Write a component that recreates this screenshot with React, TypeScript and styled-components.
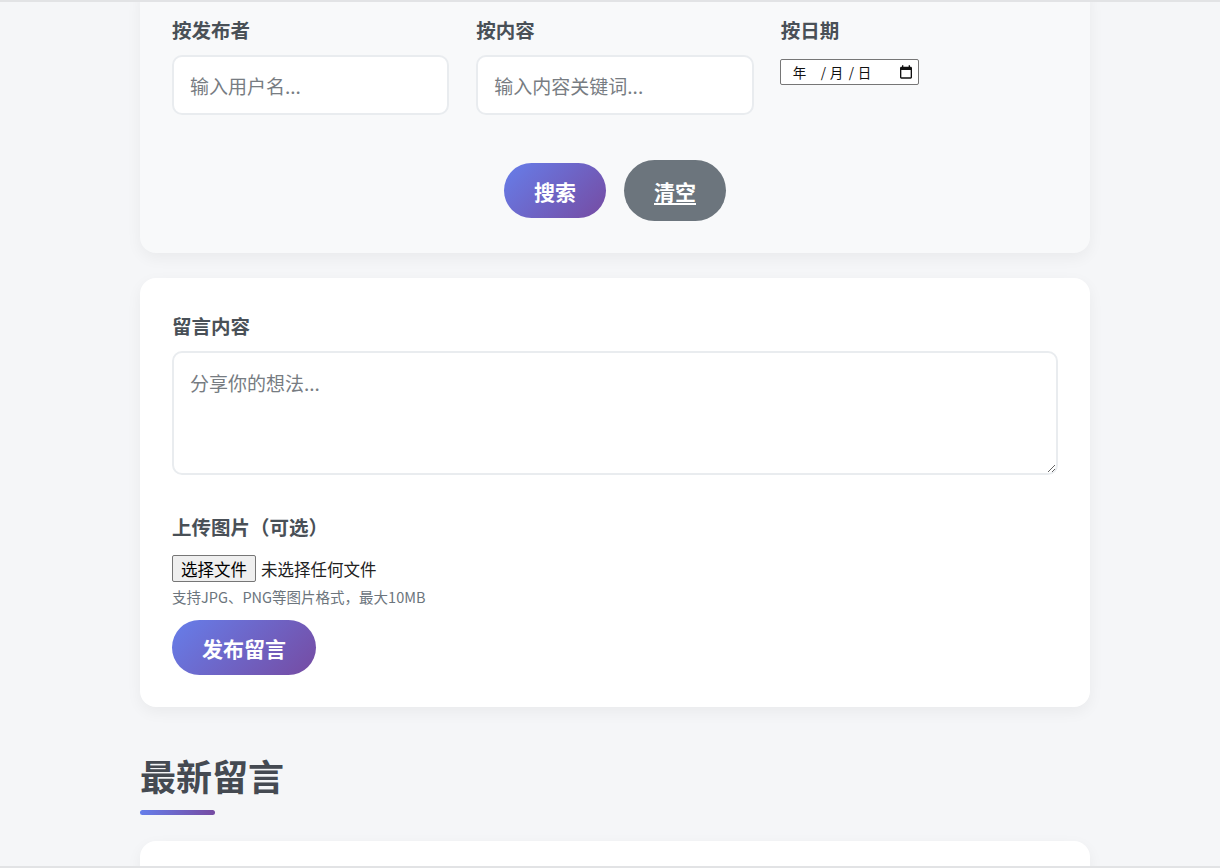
import * as React from "react";
import styled, { createGlobalStyle } from "styled-components";

const GlobalStyle = createGlobalStyle`
  * { box-sizing: border-box; }
  html, body { margin: 0; padding: 0; }
  body {
    background: #f5f6f8;
    font-family: "Noto Sans CJK SC", "Noto Sans", sans-serif;
    color: #495057;
  }
`;

const Frame = styled.div`
  height: 868px;
  overflow: hidden;
  border-top: 2px solid #e2e3e5;
  border-bottom: 2px solid #e2e3e5;
`;

const Container = styled.main`
  width: 950px;
  margin: -20px 0 0 140px;
  display: flex;
  flex-direction: column;
`;

const Card = styled.section<{ $tone?: "plain" | "soft" }>`
  background: ${(p) => (p.$tone === "soft" ? "#f8f9fa" : "#ffffff")};
  border-radius: 16px;
  box-shadow: 0 5px 15px rgba(0, 0, 0, 0.05);
  padding: 34px 32px 32px;
  margin-bottom: 25px;
`;

const FilterGrid = styled.div`
  display: grid;
  grid-template-columns: repeat(3, 1fr);
  gap: 27px;
`;

const Field = styled.div`
  display: flex;
  flex-direction: column;
  align-items: flex-start;
`;

const Label = styled.label`
  font-size: 19.5px;
  font-weight: 700;
  line-height: 27px;
  color: #495057;
  margin-bottom: 12px;
`;

const TextInput = styled.input`
  width: 100%;
  height: 60px;
  padding: 0 16px;
  border: 2px solid #e9ecef;
  border-radius: 10px;
  background: #fff;
  font-family: inherit;
  font-size: 19px;
  color: #495057;
  outline: none;

  &::placeholder {
    color: #777c82;
  }
`;

/* native-looking date field, drawn so it reads in Chinese locale */
const DateBox = styled.label`
  margin-top: 4px;
  margin-left: -1px;
  width: 139px;
  height: 26px;
  display: flex;
  align-items: center;
  padding: 0 4px 0 12px;
  border: 1px solid #767676;
  border-radius: 2px;
  background: #fff;
  font-family: "Noto Sans CJK SC", sans-serif;
  font-size: 13.5px;
  color: #111;
  cursor: text;

  input {
    display: none;
  }
`;

const DateSeg = styled.span<{ $w: number }>`
  display: inline-block;
  width: ${(p) => p.$w}px;
  white-space: pre;
`;

const CalendarIcon = styled.svg`
  width: 16px;
  height: 16px;
  margin-left: auto;
`;

const ButtonRow = styled.div`
  display: flex;
  justify-content: center;
  align-items: center;
  gap: 18px;
  margin-top: 45px;
`;

const PillButton = styled.button<{ $variant?: "primary" | "muted"; $tall?: boolean }>`
  border: none;
  border-radius: 40px;
  padding: ${(p) => (p.$tall ? "16.5px 30px" : "13.5px 30px")};
  font-family: inherit;
  font-size: 21px;
  font-weight: 700;
  line-height: 28px;
  color: #fff;
  cursor: pointer;
  text-decoration: ${(p) => (p.$variant === "muted" ? "underline" : "none")};
  text-underline-offset: 3px;
  background: ${(p) =>
    p.$variant === "muted" ? "#6c757d" : "linear-gradient(135deg, #667eea 0%, #764ba2 100%)"};
`;

const FormGroup = styled.div<{ $gap?: number }>`
  display: flex;
  flex-direction: column;
  align-items: flex-start;
  margin-bottom: ${(p) => p.$gap ?? 0}px;
`;

const TextArea = styled.textarea`
  width: 100%;
  height: 124px;
  padding: 16px 16px;
  border: 2px solid #e9ecef;
  border-radius: 10px;
  font-family: inherit;
  font-size: 19px;
  line-height: 27px;
  color: #495057;
  outline: none;
  resize: vertical;

  &::placeholder {
    color: #777c82;
  }
`;

const FilePicker = styled.label`
  margin-top: 3px;
  display: flex;
  align-items: center;
  gap: 5px;
  font-family: "Noto Sans CJK SC", sans-serif;
  font-size: 16.5px;
  color: #222;
  cursor: pointer;

  input {
    display: none;
  }
`;

const FileButton = styled.span`
  height: 27px;
  padding: 0 8px;
  display: flex;
  align-items: center;
  background: #efefef;
  border: 1px solid #767676;
  border-radius: 2px;
  color: #000;
`;

const Hint = styled.small`
  font-size: 14.5px;
  line-height: 20px;
  color: #6c757d;
  margin-top: 5px;
  margin-bottom: 13px;
`;

const SectionTitle = styled.h2`
  margin: 22px 0 0;
  font-size: 36px;
  font-weight: 700;
  line-height: 43px;
  color: #454a52;
`;

const TitleBar = styled.div`
  width: 75px;
  height: 5px;
  border-radius: 3px;
  margin: 13px 0 26px;
  background: linear-gradient(90deg, #667eea, #764ba2);
`;

const MessageCard = styled(Card)`
  height: 220px;
`;

export default function App() {
  const [fileName, setFileName] = React.useState("");

  return (
    <Frame>
      <GlobalStyle />
      <Container>
        <Card $tone="soft">
          <FilterGrid>
            <Field>
              <Label>按发布者</Label>
              <TextInput type="text" placeholder="输入用户名..." />
            </Field>
            <Field>
              <Label>按内容</Label>
              <TextInput type="text" placeholder="输入内容关键词..." />
            </Field>
            <Field>
              <Label>按日期</Label>
              <DateBox>
                <input type="date" />
                <DateSeg $w={28}>年 </DateSeg>
                <DateSeg $w={9}>/</DateSeg>
                <DateSeg $w={19}>月</DateSeg>
                <DateSeg $w={9}>/</DateSeg>
                <DateSeg $w={16}>日</DateSeg>
                <CalendarIcon viewBox="0 0 24 24" fill="#111">
                  <path d="M19 4h-1V2h-2v2H8V2H6v2H5c-1.1 0-2 .9-2 2v14c0 1.1.9 2 2 2h14c1.1 0 2-.9 2-2V6c0-1.1-.9-2-2-2zm0 16H5V9h14v11z" />
                </CalendarIcon>
              </DateBox>
            </Field>
          </FilterGrid>
          <ButtonRow>
            <PillButton $variant="primary">搜索</PillButton>
            <PillButton $variant="muted" $tall>
              清空
            </PillButton>
          </ButtonRow>
        </Card>

        <Card>
          <FormGroup $gap={38}>
            <Label>留言内容</Label>
            <TextArea placeholder="分享你的想法..." />
          </FormGroup>
          <FormGroup>
            <Label>上传图片（可选）</Label>
            <FilePicker>
              <input
                type="file"
                accept="image/*"
                onChange={(e) => setFileName(e.target.files?.[0]?.name ?? "")}
              />
              <FileButton>选择文件</FileButton>
              <span>{fileName || "未选择任何文件"}</span>
            </FilePicker>
            <Hint>支持JPG、PNG等图片格式，最大10MB</Hint>
            <PillButton $variant="primary">发布留言</PillButton>
          </FormGroup>
        </Card>

        <SectionTitle>最新留言</SectionTitle>
        <TitleBar />
        <MessageCard />
      </Container>
    </Frame>
  );
}
